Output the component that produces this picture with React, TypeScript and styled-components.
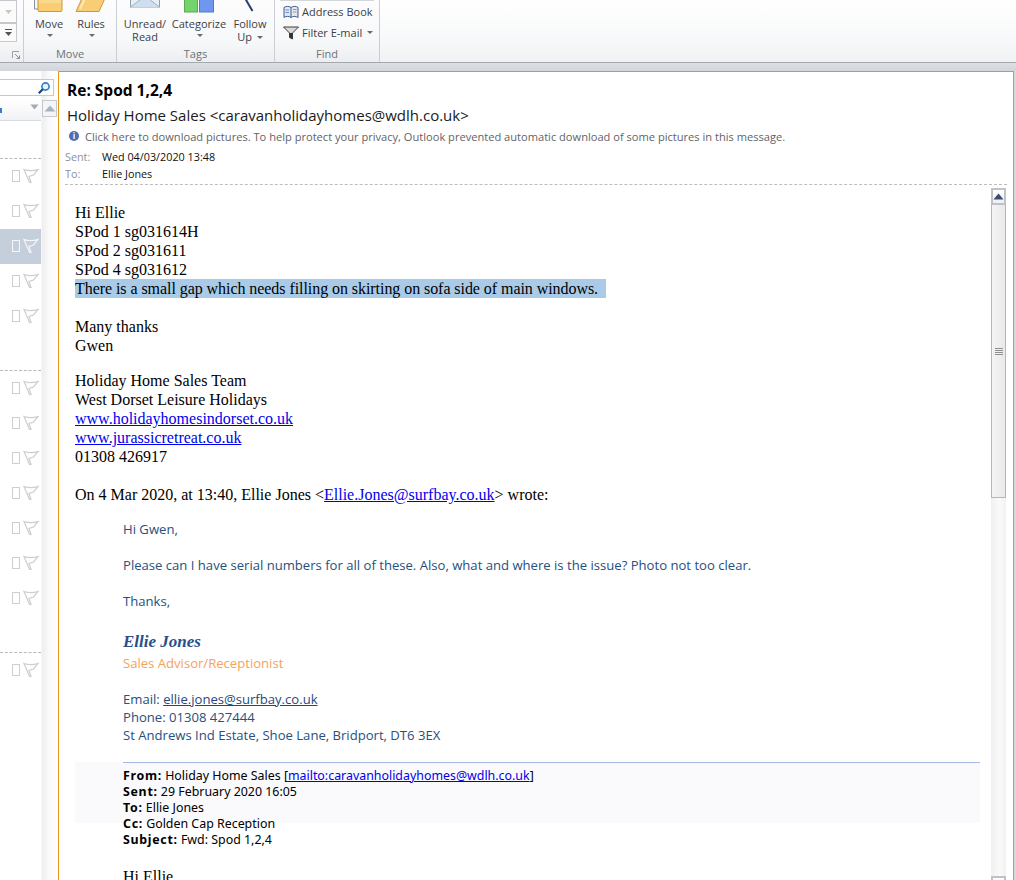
import React from "react";
import styled, { createGlobalStyle } from "styled-components";

const GlobalStyle = createGlobalStyle`
  html, body {
    margin: 0;
    padding: 0;
    background: #ffffff;
  }
  * {
    box-sizing: border-box;
  }
`;

const UI_FONT = `"Open Sans", "Noto Sans", sans-serif`;

const Window = styled.div`
  display: flex;
  flex-direction: column;
  width: 1016px;
  height: 880px;
  overflow: hidden;
  font-family: ${UI_FONT};
  background: #ffffff;
`;

/* ---------- ribbon ---------- */

const Ribbon = styled.div`
  display: flex;
  height: 63px;
  flex: none;
  border-bottom: 1px solid #a3a8ae;
  background: linear-gradient(#ffffff, #f8f9fa 60%, #eff1f3);
`;

const Group = styled.div<{ $width: number }>`
  display: flex;
  flex-direction: column;
  width: ${(p) => p.$width}px;
  flex: none;
  height: 62px;
  border-right: 1px solid #c9ced4;
  background: linear-gradient(#fdfdfe, #f7f8f9 65%, #eceef1);
`;

const GroupBody = styled.div<{ $pad?: number }>`
  display: flex;
  flex: 1;
  padding-left: ${(p) => p.$pad ?? 0}px;
  min-height: 0;
`;

const GroupLabel = styled.div`
  height: 16px;
  flex: none;
  text-align: center;
  font-size: 11px;
  line-height: 15px;
  color: #6d7278;
`;

const GalleryGroup = styled(Group)`
  position: relative;
`;

const GalleryScroll = styled.div`
  width: 17px;
  height: 42px;
  display: flex;
  flex-direction: column;
`;

const GalleryBtn = styled.div<{ $height: number }>`
  display: flex;
  align-items: center;
  justify-content: center;
  height: ${(p) => p.$height}px;
  flex: none;
  background: #fbfbfc;
  border: 1px solid #c5c9ce;
  border-left: none;
`;

const Launcher = styled.svg`
  position: absolute;
  right: 3px;
  bottom: 3px;
`;

const BigButton = styled.div<{ $width: number }>`
  display: flex;
  flex-direction: column;
  align-items: center;
  width: ${(p) => p.$width}px;
  flex: none;
  font-size: 11px;
  line-height: 13px;
  color: #3b3f45;
  white-space: nowrap;
`;

const IconSlot = styled.div`
  height: 17px;
  flex: none;
  overflow: hidden;
`;

const Caret = styled.span`
  display: inline-block;
  width: 0;
  height: 0;
  margin-left: 2px;
  vertical-align: 2px;
  border-left: 3px solid transparent;
  border-right: 3px solid transparent;
  border-top: 3px solid #666b72;
`;

const CaretRow = styled.div`
  height: 13px;
  line-height: 9px;
`;

const FindStack = styled.div`
  display: flex;
  flex-direction: column;
  width: 100%;
  padding: 0 0 0 8px;
`;

const FindTopRule = styled.div`
  height: 1px;
  margin: 0 5px 0 5px;
  flex: none;
  background: #d3d6da;
`;

const FindRow = styled.div`
  display: flex;
  align-items: center;
  gap: 3px;
  height: 21px;
  font-size: 11px;
  color: #3b3f45;
  white-space: nowrap;
`;

/* ---------- under the ribbon ---------- */

const Strip = styled.div`
  height: 8px;
  flex: none;
  background: linear-gradient(#dcdfe3, #d2d5d9);
`;

const Main = styled.div`
  display: flex;
  flex: 1;
  min-height: 0;
`;

const Sidebar = styled.div`
  display: flex;
  flex-direction: column;
  width: 58px;
  flex: none;
  background: linear-gradient(90deg, #ffffff 41px, #eeeeee 42px, #fbfbfb 50px, #ffffff 58px);
`;

const SearchBox = styled.div`
  display: flex;
  justify-content: flex-end;
  align-items: center;
  height: 17px;
  margin: 8px 4px 0 0;
  padding-right: 2px;
  flex: none;
  background: #ffffff;
  border: 1px solid #c5c9ce;
  border-left: none;
`;

const SidebarBody = styled.div`
  display: flex;
  flex: 1;
  min-height: 0;
  margin-top: 4px;
`;

const ListColumn = styled.div`
  display: flex;
  flex-direction: column;
  width: 41px;
  flex: none;
`;

const ListHeader = styled.div`
  display: flex;
  align-items: flex-start;
  justify-content: space-between;
  height: 21px;
  flex: none;
  padding: 4px 2px 0 0;
  background: linear-gradient(#ffffff, #f1f2f4);
  border-bottom: 1px solid #d9dce0;
`;

const HeaderDot = styled.span`
  display: block;
  width: 2px;
  height: 5px;
  margin-top: 4px;
  background: #3f78c4;
`;

const RowGroup = styled.div<{ $first?: boolean }>`
  margin-top: ${(p) => (p.$first ? 37 : 36)}px;
  border-top: 1px dashed #b9b9b9;
`;

const MailRow = styled.div<{ $selected?: boolean }>`
  display: flex;
  align-items: center;
  height: 35px;
  padding: 0 0 2px 12px;
  gap: 3px;
  background: ${(p) => (p.$selected ? "#c5cedb" : "transparent")};
`;

const MiniScrollUp = styled.div`
  display: flex;
  align-items: center;
  justify-content: center;
  width: 15px;
  height: 17px;
  margin-left: 1px;
  background: #f4f5f6;
  border: 1px solid #c5c9ce;
`;

/* ---------- reading pane ---------- */

const Pane = styled.div`
  display: flex;
  flex-direction: column;
  width: 956px;
  flex: none;
  border: 1px solid #e8941a;
  border-bottom: none;
  background: #ffffff;
  min-height: 0;
  overflow: hidden;
`;

const SideGutter = styled.div`
  flex: 1;
  background: #d6d9dd;
`;

const PaneHead = styled.div`
  display: flex;
  flex-direction: column;
  height: 113px;
  flex: none;
  margin-right: 6px;
  margin-left: 6px;
  padding: 8px 0 0 2px;
  border-bottom: 1px dashed #bdbdbd;
`;

const Subject = styled.div`
  height: 20px;
  font-size: 15.5px;
  line-height: 20px;
  font-weight: 700;
  color: #000000;
`;

const Sender = styled.div`
  height: 25px;
  margin-top: 3px;
  font-size: 15px;
  line-height: 25px;
  color: #1a1a1a;
  white-space: nowrap;
`;

const InfoBar = styled.div`
  display: flex;
  align-items: center;
  gap: 6px;
  height: 20px;
  margin: -2px 0 2px 2px;
  font-size: 11.1px;
  color: #5f6368;
  white-space: nowrap;
`;

const InfoIcon = styled.span`
  display: flex;
  align-items: center;
  justify-content: center;
  width: 10px;
  height: 10px;
  border-radius: 50%;
  background: #4a6fb5;
  color: #ffffff;
  font-size: 8px;
  font-weight: 700;
  line-height: 10px;
`;

const MetaRow = styled.div`
  display: flex;
  height: 17px;
  margin-left: -2px;
  font-size: 10.8px;
  line-height: 17px;
  color: #111111;
  white-space: nowrap;
`;

const MetaLabel = styled.span`
  width: 37px;
  flex: none;
  color: #8c8fa3;
`;

const BodyWrap = styled.div`
  display: flex;
  flex: 1;
  min-height: 0;
  overflow: hidden;
`;

const BodyScroll = styled.div`
  flex: 1;
  min-width: 0;
  overflow: hidden;
  padding: 18px 0 0 16px;
`;

const SerifBlock = styled.div<{ $gap?: number }>`
  margin-top: ${(p) => p.$gap ?? 0}px;
  font-family: "Liberation Serif", "Times New Roman", serif;
  font-size: 16px;
  line-height: 19px;
  color: #000000;
  white-space: nowrap;
`;

const Highlight = styled.span`
  display: inline-block;
  width: 531px;
  letter-spacing: -0.06px;
  background: #a9cbe8;
`;

const MailLink = styled.a`
  color: #0000ee;
  text-decoration: underline;
`;

const Quote = styled.div`
  margin: 16px 11px 0 48px;
`;

const QuoteLines = styled.div<{ $gap?: number }>`
  margin-top: ${(p) => p.$gap ?? 0}px;
  font-size: 13.1px;
  line-height: 18px;
  color: #25507f;
  white-space: nowrap;
`;

const SignatureName = styled.div`
  height: 22px;
  margin-top: 21px;
  font-family: "Liberation Serif", serif;
  font-size: 17px;
  line-height: 22px;
  font-style: italic;
  font-weight: 700;
  color: #27508a;
`;

const RoleLine = styled.div`
  margin-top: 1px;
  font-size: 13.1px;
  line-height: 18px;
  color: #f5a25a;
`;

const EmailLink = styled.a`
  color: #1f497d;
  text-decoration: underline;
`;

const ForwardHead = styled.div`
  margin: 18px 0 0 -48px;
  padding-left: 48px;
  background: linear-gradient(#fafafd 61px, #ffffff 61px);
`;

const ForwardInner = styled.div`
  padding-top: 5px;
  border-top: 1px solid #a6b9e0;
  font-family: "Noto Sans", "Open Sans", sans-serif;
  font-size: 12.4px;
  line-height: 16px;
  color: #000000;
  white-space: nowrap;

  b {
    letter-spacing: 0.7px;
  }
`;

const ForwardBody = styled(SerifBlock)`
  margin-top: 19px;
`;

const Scrollbar = styled.div`
  display: flex;
  flex-direction: column;
  width: 15px;
  flex: none;
  margin: 3px 7px 0 0;
  background: linear-gradient(90deg, #f0f0f1, #fafafa 60%, #f1f1f2);
`;

const ScrollBtn = styled.div`
  display: flex;
  align-items: center;
  justify-content: center;
  height: 17px;
  flex: none;
  background: linear-gradient(#ffffff, #eff0f2);
  border: 2px solid #bfc2c7;
`;

const ScrollThumb = styled.div`
  display: flex;
  flex-direction: column;
  align-items: center;
  justify-content: center;
  gap: 1px;
  height: 293px;
  flex: none;
  background: linear-gradient(90deg, #f4f4f5, #e9e9eb);
  border: 1px solid #b4b6ba;
  border-top: none;
`;

const GripLine = styled.span`
  display: block;
  width: 8px;
  height: 1px;
  background: #8f8f8f;
`;

const ScrollTrack = styled.div`
  height: 378px;
  flex: none;
`;

/* ---------- icons ---------- */

const MoveIcon = () => (
  <svg width="30" height="17" viewBox="0 0 30 17">
    <rect x="0.5" y="-6" width="12" height="15" fill="#f4f5f8" stroke="#8d93a5" />
    <rect x="4" y="-6" width="24" height="17.5" rx="1" fill="#f9cd70" stroke="#c79a3e" />
    <rect x="5" y="-6" width="22" height="9" fill="#fbd98e" />
  </svg>
);

const RulesIcon = () => (
  <svg width="32" height="17" viewBox="0 0 32 17">
    <path d="M8 -4 H31 L24 11.5 H1 Z" fill="#f8cd74" stroke="#c79a3e" />
    <path d="M11 -4 L5 9" stroke="#fde9b8" strokeWidth="2" fill="none" />
  </svg>
);

const EnvelopeIcon = () => (
  <svg width="32" height="17" viewBox="0 0 32 17">
    <rect x="1.5" y="-8" width="29" height="15" fill="#e6eef6" stroke="#8f9db0" />
    <path d="M1.5 7 L16 -4 L30.5 7" fill="#cfdeec" stroke="#9fb0c2" />
  </svg>
);

const CategorizeIcon = () => (
  <svg width="30" height="17" viewBox="0 0 30 17">
    <rect x="0.5" y="-4" width="13" height="16" fill="#74d36b" stroke="#59a852" />
    <rect x="15.5" y="-4" width="14" height="16" fill="#6f97ee" stroke="#5478c7" />
  </svg>
);

const FollowIcon = () => (
  <svg width="12" height="17" viewBox="0 0 12 17">
    <path d="M1.5 -1 L8.5 11" stroke="#2a3d6c" strokeWidth="2" fill="none" />
  </svg>
);

const AddressBookIcon = () => (
  <svg width="16" height="14" viewBox="0 0 16 14">
    <path d="M1 2.5 C3 1 6 1 8 2.5 C10 1 13 1 15 2.5 V12.5 C13 11 10 11 8 12.5 C6 11 3 11 1 12.5 Z" fill="#dfe8f5" stroke="#3e5a8c" />
    <path d="M8 2.5 V12.5" stroke="#3e5a8c" />
    <path d="M10 4.5 H13.5 M10 7 H13.5" stroke="#d08a3c" />
    <path d="M2.5 5 H6 M2.5 7.5 H6" stroke="#6f8fc0" />
  </svg>
);

const FilterIcon = () => (
  <svg width="16" height="14" viewBox="0 0 16 14">
    <path d="M0.5 1 H15.5 L9.5 7 V13 L6.5 11.5 V7 Z" fill="#d9d9d9" stroke="#3f3f3f" />
    <path d="M6.5 7 L9.5 7 V13 L6.5 11.5 Z" fill="#333333" />
  </svg>
);

const SearchIcon = () => (
  <svg width="14" height="14" viewBox="0 0 14 14">
    <circle cx="8.5" cy="5.5" r="3.6" fill="#e8f2fb" stroke="#2d7fc1" strokeWidth="1.6" />
    <path d="M5.8 8.2 L1.8 12.2" stroke="#1e3f72" strokeWidth="2.2" />
  </svg>
);

const Tri = ({ color, up, width = 12, height = 7 }: { color: string; up?: boolean; width?: number; height?: number }) => (
  <svg width={width} height={height} viewBox="0 0 12 7" preserveAspectRatio="none">
    <path d={up ? "M6 0.5 L11.5 6.5 H0.5 Z" : "M0.5 0.5 H11.5 L6 6.5 Z"} fill={color} />
  </svg>
);

const RowIcons = ({ selected }: { selected?: boolean }) => {
  const c = selected ? "#f4f6f9" : "#cecece";
  return (
    <>
      <svg width="8" height="12" viewBox="0 0 8 12">
        <rect x="0.5" y="0.5" width="7" height="11" fill="none" stroke={c} />
      </svg>
      <svg width="16" height="16" viewBox="0 0 16 16">
        <path d="M1 1.5 C5 3 10 3 15 1.5 L10.5 7 C9 7.5 7.5 8 6 8.5 L8 14.5 L6.5 14.5 Z" fill="none" stroke={c} strokeWidth="1.2" />
      </svg>
    </>
  );
};

const firstGroup = [false, false, true, false, false];
const secondGroup = [0, 1, 2, 3, 4, 5, 6];

const App: React.FC = () => {
  return (
    <Window>
      <GlobalStyle />
      <Ribbon>
        <GalleryGroup $width={24}>
          <GalleryScroll>
            <GalleryBtn $height={23}>
              <svg width="7" height="4" viewBox="0 0 7 4">
                <path d="M0 0 H7 L3.5 4 Z" fill="#c8c8c8" />
              </svg>
            </GalleryBtn>
            <GalleryBtn $height={19}>
              <svg width="7" height="7" viewBox="0 0 7 7">
                <path d="M0 0 H7 V1 H0 Z M0 3 H7 L3.5 7 Z" fill="#555555" />
              </svg>
            </GalleryBtn>
          </GalleryScroll>
          <Launcher width="8" height="8" viewBox="0 0 8 8">
            <path d="M0.5 7 V0.5 H7" fill="none" stroke="#9a9da2" />
            <path d="M3 3 L7.5 7.5 M7.5 4.5 V7.5 H4.5" fill="none" stroke="#8a8d92" />
          </Launcher>
        </GalleryGroup>

        <Group $width={93}>
          <GroupBody $pad={4}>
            <BigButton $width={42}>
              <IconSlot>
                <MoveIcon />
              </IconSlot>
              <div>Move</div>
              <CaretRow>
                <Caret />
              </CaretRow>
            </BigButton>
            <BigButton $width={42}>
              <IconSlot>
                <RulesIcon />
              </IconSlot>
              <div>Rules</div>
              <CaretRow>
                <Caret />
              </CaretRow>
            </BigButton>
          </GroupBody>
          <GroupLabel>Move</GroupLabel>
        </Group>

        <Group $width={158}>
          <GroupBody $pad={2}>
            <BigButton $width={52}>
              <IconSlot>
                <EnvelopeIcon />
              </IconSlot>
              <div>Unread/</div>
              <div>Read</div>
            </BigButton>
            <BigButton $width={56}>
              <IconSlot>
                <CategorizeIcon />
              </IconSlot>
              <div>Categorize</div>
              <CaretRow>
                <Caret />
              </CaretRow>
            </BigButton>
            <BigButton $width={46}>
              <IconSlot>
                <FollowIcon />
              </IconSlot>
              <div>Follow</div>
              <div>
                Up <Caret />
              </div>
            </BigButton>
          </GroupBody>
          <GroupLabel>Tags</GroupLabel>
        </Group>

        <Group $width={105}>
          <FindTopRule />
          <GroupBody>
            <FindStack>
              <FindRow>
                <AddressBookIcon />
                Address Book
              </FindRow>
              <FindRow>
                <FilterIcon />
                Filter E-mail <Caret />
              </FindRow>
            </FindStack>
          </GroupBody>
          <GroupLabel>Find</GroupLabel>
        </Group>
      </Ribbon>
      <Strip />

      <Main>
        <Sidebar>
          <SearchBox>
            <SearchIcon />
          </SearchBox>
          <SidebarBody>
            <ListColumn>
              <ListHeader>
                <HeaderDot />
                <Tri color="#a7abb1" width={9} height={6} />
              </ListHeader>
              <RowGroup $first>
                {firstGroup.map((selected, i) => (
                  <MailRow key={i} $selected={selected}>
                    <RowIcons selected={selected} />
                  </MailRow>
                ))}
              </RowGroup>
              <RowGroup>
                {secondGroup.map((i) => (
                  <MailRow key={i}>
                    <RowIcons />
                  </MailRow>
                ))}
              </RowGroup>
              <RowGroup>
                <MailRow>
                  <RowIcons />
                </MailRow>
              </RowGroup>
            </ListColumn>
            <MiniScrollUp>
              <Tri color="#aab2c0" up />
            </MiniScrollUp>
          </SidebarBody>
        </Sidebar>

        <Pane>
          <PaneHead>
            <Subject>Re: Spod 1,2,4</Subject>
            <Sender>Holiday Home Sales &lt;caravanholidayhomes@wdlh.co.uk&gt;</Sender>
            <InfoBar>
              <InfoIcon>i</InfoIcon>
              Click here to download pictures. To help protect your privacy, Outlook prevented automatic download of some pictures in this message.
            </InfoBar>
            <MetaRow>
              <MetaLabel>Sent:</MetaLabel>
              Wed 04/03/2020 13:48
            </MetaRow>
            <MetaRow>
              <MetaLabel>To:</MetaLabel>
              Ellie Jones
            </MetaRow>
          </PaneHead>

          <BodyWrap>
            <BodyScroll>
              <SerifBlock>
                <div>Hi Ellie</div>
                <div>SPod 1 sg031614H</div>
                <div>SPod 2 sg031611</div>
                <div>SPod 4 sg031612</div>
                <div>
                  <Highlight>There is a small gap which needs filling on skirting on sofa side of main windows.</Highlight>
                </div>
              </SerifBlock>
              <SerifBlock $gap={19}>
                <div>Many thanks</div>
                <div>Gwen</div>
              </SerifBlock>
              <SerifBlock $gap={16}>
                <div>Holiday Home Sales Team</div>
                <div>West Dorset Leisure Holidays</div>
                <div>
                  <MailLink href="#">www.holidayhomesindorset.co.uk</MailLink>
                </div>
                <div>
                  <MailLink href="#">www.jurassicretreat.co.uk</MailLink>
                </div>
                <div>01308 426917</div>
              </SerifBlock>
              <SerifBlock $gap={19}>
                On 4 Mar 2020, at 13:40, Ellie Jones &lt;<MailLink href="#">Ellie.Jones@surfbay.co.uk</MailLink>&gt; wrote:
              </SerifBlock>

              <Quote>
                <QuoteLines>Hi Gwen,</QuoteLines>
                <QuoteLines $gap={18}>
                  Please can I have serial numbers for all of these. Also, what and where is the issue? Photo not too clear.
                </QuoteLines>
                <QuoteLines $gap={18}>Thanks,</QuoteLines>
                <SignatureName>Ellie Jones</SignatureName>
                <RoleLine>Sales Advisor/Receptionist</RoleLine>
                <QuoteLines $gap={18}>
                  <div>
                    Email: <EmailLink href="#">ellie.jones@surfbay.co.uk</EmailLink>
                  </div>
                  <div>Phone: 01308 427444</div>
                  <div>St Andrews Ind Estate, Shoe Lane, Bridport, DT6 3EX</div>
                </QuoteLines>
                <ForwardHead>
                  <ForwardInner>
                    <div>
                      <b>From:</b> Holiday Home Sales [<MailLink href="#">mailto:caravanholidayhomes@wdlh.co.uk</MailLink>]
                    </div>
                    <div>
                      <b>Sent:</b> 29 February 2020 16:05
                    </div>
                    <div>
                      <b>To:</b> Ellie Jones
                    </div>
                    <div>
                      <b>Cc:</b> Golden Cap Reception
                    </div>
                    <div>
                      <b>Subject:</b> Fwd: Spod 1,2,4
                    </div>
                  </ForwardInner>
                </ForwardHead>
                <ForwardBody>Hi Ellie</ForwardBody>
              </Quote>
            </BodyScroll>

            <Scrollbar>
              <ScrollBtn>
                <Tri color="#3f4a72" up />
              </ScrollBtn>
              <ScrollThumb>
                <GripLine />
                <GripLine />
                <GripLine />
                <GripLine />
              </ScrollThumb>
              <ScrollTrack />
              <ScrollBtn />
            </Scrollbar>
          </BodyWrap>
        </Pane>
        <SideGutter />
      </Main>
    </Window>
  );
};

export default App;
